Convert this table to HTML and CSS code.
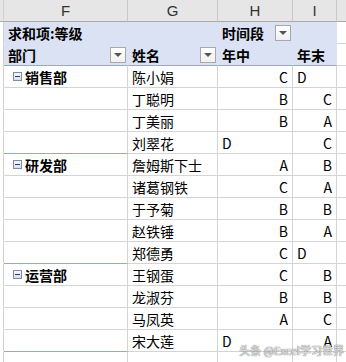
FILE: index.html
```html
<!DOCTYPE html>
<html lang="zh">
<head>
<meta charset="utf-8">
<title>数据透视表</title>
<link rel="stylesheet" href="styles.css">
</head>
<body>
<div class="sheet">
  <div class="c hd e"></div><div class="c hd">F</div><div class="c hd">G</div><div class="c hd">H</div><div class="c hd">I</div><div class="c hd j"></div>

  <div class="c e"></div><div class="c pv b">求和项:等级</div><div class="c pv"></div><div class="c pv b flt"><span>时间段</span><span class="dd"></span></div><div class="c pv"></div><div class="c j"></div>

  <div class="c e"></div><div class="c pv pvl b flt"><span>部门</span><span class="dd"></span></div><div class="c pv pvl b flt"><span>姓名</span><span class="dd"></span></div><div class="c pv pvl b">年中</div><div class="c pv pvl b">年末</div><div class="c j"></div>

  <div class="c e"></div><div class="c grp b"><span class="mn"></span>销售部</div><div class="c">陈小娟</div><div class="c r">C</div><div class="c">D</div><div class="c j"></div>
  <div class="c e"></div><div class="c"></div><div class="c">丁聪明</div><div class="c r">B</div><div class="c r">C</div><div class="c j"></div>
  <div class="c e"></div><div class="c"></div><div class="c">丁美丽</div><div class="c r">B</div><div class="c r">A</div><div class="c j"></div>
  <div class="c e"></div><div class="c gend"></div><div class="c">刘翠花</div><div class="c">D</div><div class="c r">C</div><div class="c j"></div>

  <div class="c e"></div><div class="c grp b"><span class="mn"></span>研发部</div><div class="c">詹姆斯下士</div><div class="c r">A</div><div class="c r">B</div><div class="c j"></div>
  <div class="c e"></div><div class="c"></div><div class="c">诸葛钢铁</div><div class="c r">C</div><div class="c r">A</div><div class="c j"></div>
  <div class="c e"></div><div class="c"></div><div class="c">于予菊</div><div class="c r">B</div><div class="c r">B</div><div class="c j"></div>
  <div class="c e"></div><div class="c"></div><div class="c">赵铁锤</div><div class="c r">B</div><div class="c r">A</div><div class="c j"></div>
  <div class="c e"></div><div class="c gend"></div><div class="c">郑德勇</div><div class="c r">C</div><div class="c">D</div><div class="c j"></div>

  <div class="c e"></div><div class="c grp b"><span class="mn"></span>运营部</div><div class="c">王钢蛋</div><div class="c r">C</div><div class="c r">B</div><div class="c j"></div>
  <div class="c e"></div><div class="c"></div><div class="c">龙淑芬</div><div class="c r">B</div><div class="c r">B</div><div class="c j"></div>
  <div class="c e"></div><div class="c"></div><div class="c">马凤英</div><div class="c r">A</div><div class="c r">C</div><div class="c j"></div>
  <div class="c e"></div><div class="c gend"></div><div class="c">宋大莲</div><div class="c">D</div><div class="c r">A</div><div class="c j"></div>

  <div class="c e"></div><div class="c"></div><div class="c"></div><div class="c"></div><div class="c"></div><div class="c j"></div>
</div>
<div class="wm">头条 @Excel学习世界</div>
</body>
</html>
```

FILE: styles.css
```css
html, body {
  margin: 0;
  padding: 0;
  background: #ffffff;
  overflow: hidden;
}
body {
  width: 346px;
  height: 362px;
  position: relative;
  font-family: "Noto Sans CJK SC", "Noto Sans", sans-serif;
  font-size: 14px;
  color: #000;
}
.sheet {
  display: grid;
  grid-template-columns: 4px 124px 90px 75px 44px 9px;
  grid-auto-rows: 22px;
}
.c {
  box-sizing: border-box;
  border-right: 1px solid #d4d4d4;
  border-bottom: 1px solid #d4d4d4;
  display: flex;
  align-items: center;
  padding: 0 4px;
  white-space: nowrap;
  overflow: hidden;
  line-height: 1;
}
.c.e {
  border-bottom-color: transparent;
  border-right-color: #d0d0d0;
  padding: 0;
}
.c.j {
  border-right: none;
  padding: 0;
}
.c.r {
  justify-content: flex-end;
}
.hd {
  background: #e6e6e6;
  border-right-color: #c8c8c8;
  border-bottom-color: #aaaaaa;
  justify-content: center;
  font-family: "Liberation Sans", "Noto Sans", sans-serif;
  font-size: 15px;
  color: #333;
}
.hd.e {
  border-bottom-color: #aaaaaa;
}
.pv {
  background: #dbe2f3;
  border-right-color: transparent;
  border-bottom-color: transparent;
}
.pvl {
  border-bottom: 1px solid #8eaadb;
}
.b {
  font-weight: 700;
}
.flt {
  justify-content: space-between;
  padding-right: 1px;
}
.dd {
  box-sizing: border-box;
  width: 16px;
  height: 16px;
  border: 1px solid #a8a8a8;
  background: linear-gradient(#ffffff, #f0f0f0);
  display: flex;
  align-items: center;
  justify-content: center;
}
.dd::after {
  content: "";
  width: 0;
  height: 0;
  border-left: 4px solid transparent;
  border-right: 4px solid transparent;
  border-top: 4px solid #555555;
  margin-top: 1px;
}
.grp {
  padding-left: 9px;
  gap: 3px;
}
.mn {
  box-sizing: border-box;
  width: 9px;
  height: 9px;
  border: 1px solid #7e8ca8;
  background: linear-gradient(#f6f8fc, #d8deea);
  display: flex;
  align-items: center;
  justify-content: center;
}
.mn::after {
  content: "";
  width: 5px;
  height: 1px;
  background: #2a3f6a;
}
.gend {
  border-bottom-color: #8eaadb;
}
.wm {
  position: absolute;
  right: 2px;
  bottom: 6px;
  font-size: 11px;
  line-height: 1;
  color: rgba(255, 255, 255, 0.85);
  text-shadow: 0 0 1px #555, 0 0 1px #777;
  white-space: nowrap;
}
```
